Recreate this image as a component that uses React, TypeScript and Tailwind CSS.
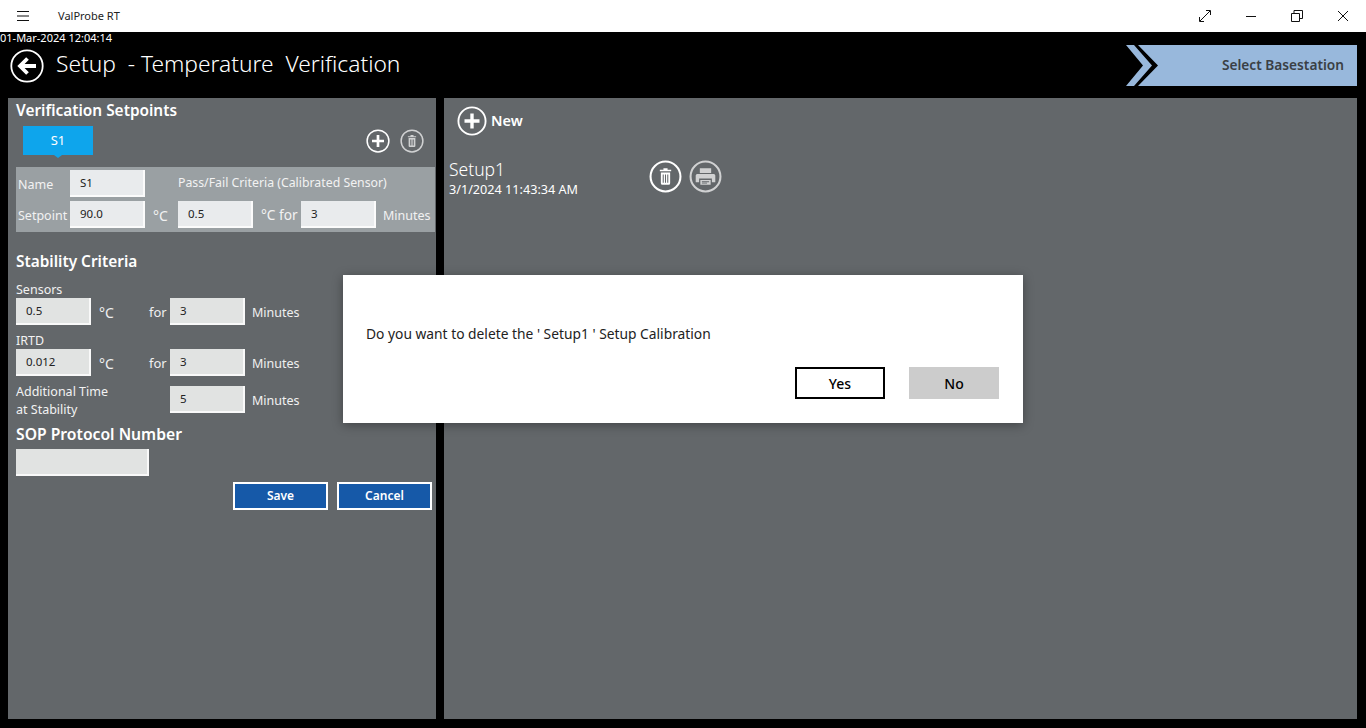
const font = "font-['Noto_Sans',sans-serif]";

function Field({ value, w = "w-[75px]", tone = "bg-[#e9ebed]" }: { value?: string; w?: string; tone?: string }) {
  return (
    <div className={`${w} ${tone} h-[27px] shrink-0 border-r-2 border-b-2 border-white/80 pl-[10px] pt-[3px] text-[11.500px] leading-[20px] text-[#222]`}>
      {value}
    </div>
  );
}

function RoundIcon({ size = 24, muted = false, children }: { size?: number; muted?: boolean; children: React.ReactNode }) {
  return (
    <svg width={size} height={size} viewBox="0 0 32 32" fill="none" className={muted ? "opacity-70" : ""}>
      <circle cx="16" cy="16" r="14.5" stroke="#fff" strokeWidth="2" />
      {children}
    </svg>
  );
}

const plus = <path d="M16 8v16M8 16h16" stroke="#fff" strokeWidth="3.6" />;
const trash = (
  <path
    fillRule="evenodd"
    d="M14 8h4v1.500h3.500V11h-11V9.500H14zM11.500 12h9v10.500a1.500 1.500 0 0 1-1.500 1.500h-6a1.500 1.500 0 0 1-1.500-1.500zM13.300 14v8h1v-8zM15.500 14v8h1v-8zM17.700 14v8h1v-8z"
    fill="#fff"
  />
);
const printer = (
  <path
    fillRule="evenodd"
    d="M10.500 8h11v4.500h-11zM8 13.500h16a1.500 1.500 0 0 1 1.500 1.500v6.500h-3.300V18H9.800v3.500H6.500V15A1.500 1.500 0 0 1 8 13.500zM11 19.300h10V24H11zM12.500 20.500v1h7v-1zM12.500 22v.8h5V22z"
    fill="#fff"
  />
);

function StabilityRow({ value, time }: { value: string; time: string }) {
  return (
    <div className="flex h-[27px] items-center">
      <Field value={value} tone="bg-[#e1e3e2]" />
      <span className="ml-[8px] w-[50px] pt-[2px] text-[14px] text-[#f0f0f0]">°C</span>
      <span className="w-[21px] pt-[2px] text-[13px] text-[#f0f0f0]">for</span>
      <Field value={time} tone="bg-[#e1e3e2]" />
      <span className="ml-[7px] pt-[3px] text-[12.500px] text-[#f0f0f0]">Minutes</span>
    </div>
  );
}

export default function App() {
  return (
    <div className={`${font} relative flex h-[728px] w-[1366px] flex-col overflow-hidden bg-black`}>
      {/* window title bar */}
      <div className="flex h-[32px] items-center bg-white text-black">
        <svg width="14" height="12" viewBox="0 0 14 12" className="ml-[16px]" stroke="#111" strokeWidth="1">
          <path d="M1 1.500h12M1 6h12M1 10.500h12" />
        </svg>
        <span className="ml-[28px] text-[11px] text-[#222]">ValProbe RT</span>
        <div className="ml-auto flex">
          <div className="flex w-[46px] justify-center">
            <svg width="12" height="12" viewBox="0 0 12 12" fill="none" stroke="#111">
              <path d="M1 11L11 1M7 .5h4.500V5M.5 7v4.500H5" />
            </svg>
          </div>
          <div className="flex w-[46px] justify-center">
            <svg width="12" height="12" viewBox="0 0 12 12" fill="none" stroke="#111">
              <path d="M1 6.500h10" />
            </svg>
          </div>
          <div className="flex w-[46px] justify-center">
            <svg width="12" height="12" viewBox="0 0 12 12" fill="none" stroke="#111">
              <path d="M.5 3.500h8v8h-8zM3 3.500V.5h8.500v8H8.500" />
            </svg>
          </div>
          <div className="flex w-[46px] justify-center">
            <svg width="12" height="12" viewBox="0 0 12 12" fill="none" stroke="#111">
              <path d="M1 1l10 10M11 1L1 11" />
            </svg>
          </div>
        </div>
      </div>

      {/* app header */}
      <div className="relative h-[66px] text-white">
        <div className="h-[13px] text-[11px] leading-[11px]">01-Mar-2024 12:04:14</div>
        <div className="mt-[4px] flex items-center pl-[10px]">
          <svg width="34" height="34" viewBox="0 0 34 34" fill="none">
            <circle cx="17" cy="17" r="15.700" stroke="#fff" strokeWidth="1.800" />
            <path d="M26 17H11M17.500 9.500L10 17l7.500 7.500" stroke="#fff" strokeWidth="3.800" />
          </svg>
          <span className="mb-[4px] ml-[12px] whitespace-pre text-[22.750px] leading-[30px] font-light">Setup  - Temperature  Verification</span>
        </div>
        <div className="absolute top-[13px] right-[9px] flex h-[41px] items-center">
          <svg width="32" height="41" viewBox="0 0 32 41" className="-mr-[20px]">
            <path d="M0 0h8l18 20.500L8 41H0l17-20.500z" fill="#98b8dc" />
          </svg>
          <div className="flex h-[41px] w-[219px] items-center justify-end bg-[#98b8dc] pr-[13px] text-[13.700px] font-semibold text-[#3a3f45] [clip-path:polygon(0_0,100%_0,100%_100%,0_100%,20px_50%)]">
            Select Basestation
          </div>
        </div>
      </div>

      {/* panels */}
      <div className="flex h-[621px] gap-[8px] pl-[8px]">
        <div className="w-[428px] bg-[#63676a] pl-[8px] text-[#f2f2f2]">
          <h2 className="h-[28px] pt-[2px] text-[15.400px] leading-[22px] font-semibold text-white">Verification Setpoints</h2>
          <div className="flex h-[41px] items-start pl-[7px]">
            <div className="relative flex h-[29px] w-[70px] items-center justify-center bg-[#0ea5ec] text-[13px] text-white">
              S1
              <span className="absolute -bottom-[3px] left-[31px] h-0 w-0 border-x-[4px] border-t-[3px] border-x-transparent border-t-[#0ea5ec]" />
            </div>
            <div className="ml-auto mr-[12px] flex gap-[10px] pt-[3px]">
              <RoundIcon>{plus}</RoundIcon>
              <RoundIcon muted>{trash}</RoundIcon>
            </div>
          </div>
          <div className="flex h-[65px] w-[419px] flex-col gap-[4px] bg-[#9aa0a3] pt-[3px] text-[12.500px]">
            <div className="flex h-[27px] items-center">
              <span className="w-[54px] pl-[2px] pt-[4px]">Name</span>
              <Field value="S1" />
              <span className="ml-[33px] text-[12.300px]">Pass/Fail Criteria (Calibrated Sensor)</span>
            </div>
            <div className="flex h-[27px] items-center">
              <span className="w-[54px] pl-[2px] pt-[4px]">Setpoint</span>
              <Field value="90.0" />
              <span className="ml-[8px] w-[25px] pt-[2px] text-[14px]">°C</span>
              <Field value="0.5" />
              <span className="ml-[8px] w-[40px] pt-[2px] text-[13.700px] whitespace-nowrap">°C for</span>
              <Field value="3" />
              <span className="ml-[7px] pt-[4px]">Minutes</span>
            </div>
          </div>

          <h2 className="mt-[18px] h-[26px] text-[15.400px] leading-[24px] font-semibold text-white">Stability Criteria</h2>
          <div className="mt-[6px] h-[16px] text-[12.500px] leading-[16px]">Sensors</div>
          <StabilityRow value="0.5" time="3" />
          <div className="mt-[7px] h-[17px] text-[12.500px] leading-[17px]">IRTD</div>
          <StabilityRow value="0.012" time="3" />
          <div className="mt-[6px] flex h-[35px] items-start">
            <div className="w-[154px] pt-[1px] text-[12.500px] leading-[18px]">
              Additional Time
              <br />
              at Stability
            </div>
            <div className="mt-[4px] flex items-center">
              <Field value="5" tone="bg-[#e1e3e2]" />
              <span className="ml-[7px] pt-[4px] text-[12.500px]">Minutes</span>
            </div>
          </div>
          <h2 className="mt-[4px] h-[28px] text-[15.700px] leading-[26px] font-semibold text-white">SOP Protocol Number</h2>
          <Field w="w-[133px]" tone="bg-[#e1e3e2]" />
          <div className="mt-[6px] flex gap-[9px] pl-[217px]">
            <button className="h-[28px] w-[95px] border-2 border-white bg-[#1659a8] text-[12px] font-semibold text-white">Save</button>
            <button className="h-[28px] w-[95px] border-2 border-white bg-[#1659a8] text-[12px] font-semibold text-white">Cancel</button>
          </div>
        </div>

        <div className="w-[913px] bg-[#63676a] pl-[5px] text-white">
          <div className="mt-[8px] flex items-center pl-[8px]">
            <RoundIcon size={30}>{plus}</RoundIcon>
            <span className="ml-[4px] text-[14.500px] font-semibold">New</span>
          </div>
          <div className="mt-[22px] flex">
            <div className="w-[200px]">
              <div className="text-[17.500px] leading-[22px] font-light">Setup1</div>
              <div className="text-[12.650px] leading-[19px]">3/1/2024 11:43:34 AM</div>
            </div>
            <div className="mt-[2px] flex gap-[7px]">
              <RoundIcon size={33}>{trash}</RoundIcon>
              <RoundIcon size={33} muted>{printer}</RoundIcon>
            </div>
          </div>
        </div>
      </div>

      {/* confirmation dialog */}
      <div className="absolute top-[275px] left-[343px] h-[148px] w-[680px] bg-white px-[23px] text-black shadow-[0_2px_10px_rgba(0,0,0,0.35)]">
        <p className="mt-[49px] text-[13.800px] leading-[20px] text-[#222]">Do you want to delete the ' Setup1 ' Setup Calibration</p>
        <div className="mt-[23px] flex justify-end gap-[24px] pr-[1px]">
          <button className="h-[32px] w-[90px] border-2 border-black text-[14px] font-medium">Yes</button>
          <button className="h-[32px] w-[90px] bg-[#cccccc] text-[14px] font-medium">No</button>
        </div>
      </div>
    </div>
  );
}
